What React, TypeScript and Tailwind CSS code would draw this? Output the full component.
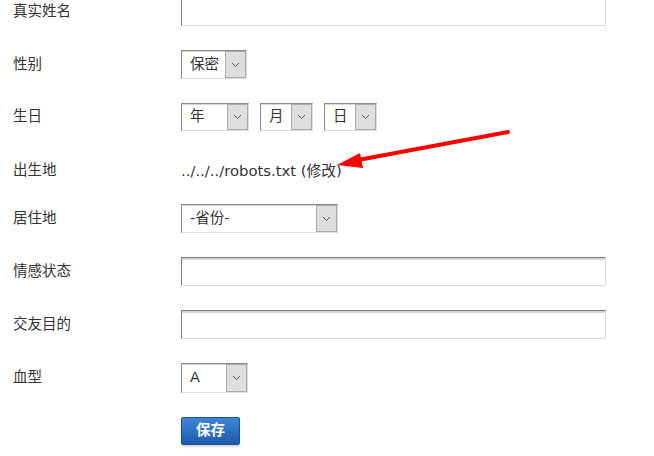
import { ReactNode } from "react";

const font = "font-['DejaVu_Sans','Noto_Sans_CJK_SC',sans-serif]";

function Chevron() {
  return (
    <svg width="9" height="6" viewBox="0 0 9 6" className="block">
      <path d="M1 1 L4.5 4.5 L8 1" fill="none" stroke="#555" strokeWidth="1" />
    </svg>
  );
}

function Select({ value, width, height = 29 }: { value: string; width: number; height?: number }) {
  return (
    <div
      className="flex bg-white border border-t-[#8a8a8a] border-l-[#8a8a8a] border-r-[#dcdcdc] border-b-[#dcdcdc] shadow-[inset_0_1px_0_#d8d8d8]"
      style={{ width, height }}
    >
      <div className="flex-1 flex items-center pl-[8px] text-[14.5px] text-[#333]">{value}</div>
      <div className="w-[21px] flex items-center justify-center bg-[#dedede] border border-[#aaaaaa]">
        <Chevron />
      </div>
    </div>
  );
}

function TextInput() {
  return (
    <div className="w-[425px] h-[29px] bg-white border border-t-[#7c7c7c] border-l-[#7c7c7c] border-r-[#dcdcdc] border-b-[#dcdcdc] shadow-[inset_0_2px_0_#d4d4d4]" />
  );
}

function Row({ label, children, className = "" }: { label: string; children: ReactNode; className?: string }) {
  return (
    <div className={`flex items-center ${className}`}>
      <div className="w-[181px] pl-[13px] text-[14.5px] text-[#333]">{label}</div>
      {children}
    </div>
  );
}

export default function App() {
  return (
    <div className={`relative w-[654px] h-[456px] overflow-hidden bg-white ${font}`}>
      <div className="flex flex-col gap-[24px] -mt-[3px]">
        <Row label="真实姓名">
          <TextInput />
        </Row>
        <Row label="性别">
          <Select value="保密" width={66} />
        </Row>
        <Row label="生日">
          <div className="flex gap-[11px]">
            <Select value="年" width={68} height={28} />
            <Select value="月" width={53} height={28} />
            <Select value="日" width={53} height={28} />
          </div>
        </Row>
        <Row label="出生地" className="mt-[4px] -mb-[3px]">
          <div className="h-[24px] flex items-center text-[14.8px] text-[#333]">../../../robots.txt (修改)</div>
        </Row>
        <Row label="居住地">
          <Select value="-省份-" width={157} />
        </Row>
        <Row label="情感状态">
          <TextInput />
        </Row>
        <Row label="交友目的">
          <TextInput />
        </Row>
        <Row label="血型">
          <Select value="A" width={67} height={30} />
        </Row>
        <div className="flex pl-[181px]">
          <button className="w-[59px] h-[28px] flex items-center justify-center text-white font-bold text-[14.5px] rounded-[2px] border border-[#1c4f96] bg-gradient-to-b from-[#3f86d6] to-[#1d5bab] shadow-[0_2px_2px_rgba(0,0,0,0.15)]">
            保存
          </button>
        </div>
      </div>

      {/* red annotation arrow */}
      <svg className="absolute left-0 top-0 pointer-events-none" width="654" height="456">
        <line x1="508" y1="132" x2="358" y2="160" stroke="#ff0000" strokeWidth="4" strokeLinecap="round" />
        <polygon points="337,165 360,153 363,168" fill="#ff0000" />
      </svg>
    </div>
  );
}
